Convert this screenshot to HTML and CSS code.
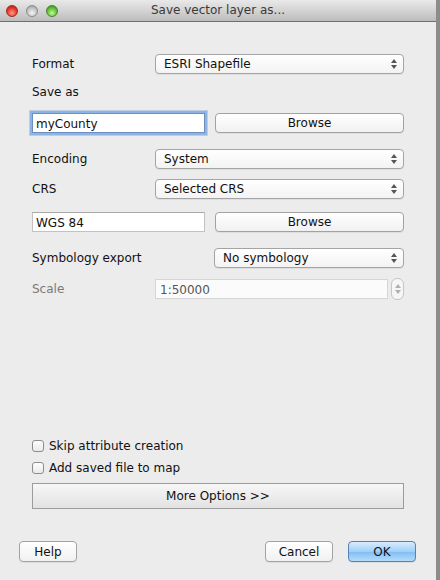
FILE: index.html
```html
<!DOCTYPE html>
<html>
<head>
<meta charset="utf-8">
<link rel="stylesheet" href="styles.css">
</head>
<body>
<div class="window">
  <div class="titlebar">
    <div class="lights">
      <span class="light red"></span>
      <span class="light gray"></span>
      <span class="light green"></span>
    </div>
    <div class="title">Save vector layer as...</div>
  </div>
  <div class="content">
    <div class="form">
      <div class="row r-format">
        <span class="label">Format</span>
        <div class="combo c-main"><span>ESRI Shapefile</span><span class="arrows"><i class="up"></i><i class="down"></i></span></div>
      </div>
      <div class="row r-saveas">
        <span class="label">Save as</span>
      </div>
      <div class="row r-file">
        <div class="input focus">myCounty</div>
        <div class="button browse">Browse</div>
      </div>
      <div class="row r-enc">
        <span class="label">Encoding</span>
        <div class="combo c-main"><span>System</span><span class="arrows"><i class="up"></i><i class="down"></i></span></div>
      </div>
      <div class="row r-crs">
        <span class="label">CRS</span>
        <div class="combo c-main"><span>Selected CRS</span><span class="arrows"><i class="up"></i><i class="down"></i></span></div>
      </div>
      <div class="row r-wgs">
        <div class="input">WGS 84</div>
        <div class="button browse">Browse</div>
      </div>
      <div class="row r-sym">
        <span class="label">Symbology export</span>
        <div class="combo c-sym"><span>No symbology</span><span class="arrows"><i class="up"></i><i class="down"></i></span></div>
      </div>
      <div class="row r-scale">
        <span class="label disabled">Scale</span>
        <div class="input scale">1:50000</div>
        <div class="spin"><i class="up"></i><i class="down"></i></div>
      </div>
    </div>
    <div class="lower">
      <label class="check"><span class="box"></span>Skip attribute creation</label>
      <label class="check c2"><span class="box"></span>Add saved file to map</label>
      <div class="more">More Options &gt;&gt;</div>
    </div>
    <div class="footer">
      <div class="button fbtn help">Help</div>
      <div class="spacer"></div>
      <div class="button fbtn cancel">Cancel</div>
      <div class="button fbtn ok">OK</div>
    </div>
  </div>
</div>
</body>
</html>
```

FILE: styles.css
```css
html, body {
  margin: 0;
  padding: 0;
}
body {
  width: 440px;
  height: 580px;
  background: #8c8c8c;
  font-family: "DejaVu Sans", "Liberation Sans", sans-serif;
  font-size: 12px;
  color: #111;
  overflow: hidden;
}
.window {
  width: 436px;
  height: 580px;
  background: #ececec;
  display: flex;
  flex-direction: column;
}
.titlebar {
  height: 21px;
  border-bottom: 1px solid #6f6f6f;
  background: linear-gradient(#e9e9e9, #cfcfcf 60%, #bcbcbc);
  position: relative;
  display: flex;
  align-items: center;
}
.lights {
  display: flex;
  gap: 8px;
  padding-left: 6px;
}
.light {
  width: 12px;
  height: 12px;
  border-radius: 50%;
  box-sizing: border-box;
  display: block;
}
.light.red {
  background: radial-gradient(circle at 50% 70%, #ff9a8c 0, #e8392b 55%, #a3160d 100%);
  border: 1px solid #9b2a20;
}
.light.gray {
  background: radial-gradient(circle at 50% 70%, #f4f4f4 0, #c4c4c4 55%, #8f8f8f 100%);
  border: 1px solid #8a8a8a;
}
.light.green {
  background: radial-gradient(circle at 50% 70%, #c8f59a 0, #62c13a 55%, #2c7d14 100%);
  border: 1px solid #3f8a26;
}
.title {
  position: absolute;
  left: 0;
  right: 0;
  top: 3px;
  text-align: center;
  font-size: 12px;
  color: #3a3a3a;
}
.content {
  flex: 1;
  display: flex;
  flex-direction: column;
  padding: 0 32px;
}
.form {
  display: flex;
  flex-direction: column;
}
.row {
  display: flex;
  align-items: center;
  height: 20px;
}
.r-format { margin-top: 32px; }
.r-saveas { margin-top: 8px; height: 18px; padding-top: 1px; }
.r-file { margin-top: 12px; }
.r-enc { margin-top: 16px; }
.r-crs { margin-top: 10px; }
.r-wgs { margin-top: 13px; }
.r-sym { margin-top: 16px; }
.r-scale { margin-top: 11px; }

.label {
  width: 123px;
  flex: none;
}
.r-sym .label { width: 182px; }
.label.disabled { color: #7a7a7a; }

.combo {
  flex: 1;
  height: 20px;
  box-sizing: border-box;
  border: 1px solid #a4a4a4;
  border-radius: 4px;
  background: linear-gradient(#ffffff, #f3f3f3);
  box-shadow: 0 1px 0 rgba(0,0,0,0.06);
  display: flex;
  align-items: center;
  justify-content: space-between;
  padding: 0 6px 0 8px;
}
.arrows, .spin {
  display: flex;
  flex-direction: column;
  align-items: center;
  gap: 2px;
}
.arrows i, .spin i {
  display: block;
  width: 0;
  height: 0;
  border-left: 3px solid transparent;
  border-right: 3px solid transparent;
}
.arrows i.up { border-bottom: 4px solid #555; }
.arrows i.down { border-top: 4px solid #555; }

.input {
  width: 173px;
  height: 20px;
  box-sizing: border-box;
  border: 1px solid #c2c2c2;
  border-top-color: #a9a9a9;
  background: #fff;
  padding: 1px 0 0 3px;
  display: flex;
  align-items: center;
  flex: none;
}
.input.focus {
  border-color: #6d8fbd;
  box-shadow: 0 0 0 2px #8db4e6, 0 0 0 3px rgba(120,160,220,0.4);
}
.button {
  height: 20px;
  box-sizing: border-box;
  border: 1px solid #a2a2a2;
  border-radius: 4px;
  background: linear-gradient(#ffffff, #f1f1f1);
  display: flex;
  align-items: center;
  justify-content: center;
  box-shadow: 0 1px 0 rgba(0,0,0,0.06);
}
.browse {
  flex: 1;
  margin-left: 10px;
}
.input.scale {
  width: auto;
  flex: 1;
  margin-left: 0;
  color: #555;
  border-color: #d6d6d6;
  background: #fbfbfb;
  padding-left: 4px;
}
.spin {
  width: 13px;
  height: 22px;
  box-sizing: border-box;
  border: 1px solid #c6c6c6;
  border-radius: 6px;
  background: #f6f6f6;
  margin-left: 3px;
  justify-content: center;
}
.spin i.up { border-bottom: 4px solid #b0b0b0; }
.spin i.down { border-top: 4px solid #b0b0b0; }

.lower {
  margin-top: 139px;
  display: flex;
  flex-direction: column;
}
.check {
  display: flex;
  align-items: center;
  height: 16px;
}
.check.c2 { margin-top: 6px; }
.box {
  width: 12px;
  height: 12px;
  box-sizing: border-box;
  border: 1px solid #8d8d8d;
  border-radius: 3px;
  background: linear-gradient(#fdfdfd, #eaeaea);
  margin-right: 5px;
  flex: none;
}
.more {
  margin-top: 7px;
  height: 26px;
  box-sizing: border-box;
  border: 1px solid #9c9c9c;
  background: linear-gradient(#f7f7f7, #e2e2e2);
  display: flex;
  align-items: center;
  justify-content: center;
}
.footer {
  margin: 32px -12px 0 -13px;
  display: flex;
  align-items: center;
}
.spacer { flex: 1; }
.fbtn { height: 21px; }
.help { width: 58px; }
.cancel { width: 68px; }
.ok {
  width: 68px;
  margin-left: 15px;
  border-color: #5b7fae;
  background: linear-gradient(#d8ecfd, #9fd0f8 50%, #7fbdf3 51%, #b4dcfb);
}
```
